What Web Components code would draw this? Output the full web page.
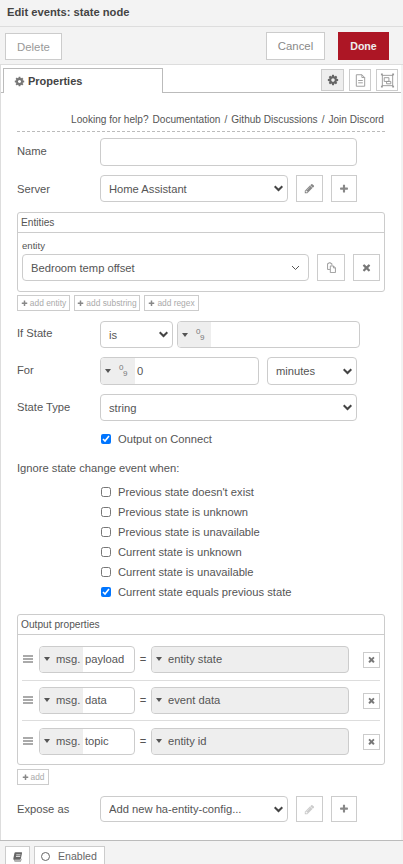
<!DOCTYPE html>
<html>
<head>
<meta charset="utf-8">
<title>Edit events: state node</title>
<style>
  html, body { margin: 0; height: 100%; }
  body { font-family: "Liberation Sans", Arial, sans-serif; font-size: 11.2px; color: #555; background: #fff; }
</style>
</head>
<body>
<ed-tray>
  <ed-bar slot="title">Edit events: state node</ed-bar>
  <ed-toolbar slot="toolbar">
    <ed-btn style="width:57px;height:27px;margin-top:1px;margin-right:auto;color:#999;font-size:11.4px">Delete</ed-btn>
    <ed-btn style="width:59px;height:28px;margin-right:13px;color:#888;font-size:11.4px">Cancel</ed-btn>
    <ed-btn kind="primary" style="width:51px;height:28px;font-size:10.6px">Done</ed-btn>
  </ed-toolbar>
  <ed-tabs slot="tabs"></ed-tabs>

  <ed-help></ed-help>

  <ed-row label="Name" style="margin-top:6px"><ed-field style="width:257px;height:28px"></ed-field></ed-row>
  <ed-row label="Server" style="margin-top:9px;--label-top:1px">
    <ed-select style="width:188px;height:27px">Home Assistant</ed-select>
    <ed-btn icon="pencil" size="11" style="width:27px;height:27px;margin-left:8px;color:#888"></ed-btn>
    <ed-btn icon="plus" size="10" style="width:26px;height:27px;margin-left:8px;color:#888"></ed-btn>
  </ed-row>

  <ed-box heading="Entities" style="margin-top:10px;height:80px">
    <div style="margin:7px 4px 0 4px;font-size:9.6px;line-height:11px">entity</div>
    <div style="display:flex;margin:3px 4px 0 4px">
      <ed-select thin style="width:287px;height:27px">Bedroom temp offset</ed-select>
      <ed-btn icon="copy" size="11" style="width:28px;height:27px;margin-left:8px;color:#999"></ed-btn>
      <ed-btn icon="times" size="11" style="width:27px;height:27px;margin-left:8px;color:#777"></ed-btn>
    </div>
  </ed-box>
  <ed-adds style="margin-top:3px">
    <ed-btn icon="plus" size="7" small style="width:53px;height:16px">add entity</ed-btn>
    <ed-btn icon="plus" size="7" small style="width:66px;height:16px">add substring</ed-btn>
    <ed-btn icon="plus" size="7" small style="width:55px;height:16px">add regex</ed-btn>
  </ed-adds>

  <ed-row label="If State" style="margin-top:10px;--label-top:-1px">
    <ed-select style="width:73px;height:27px">is</ed-select>
    <ed-typed num left="33" style="width:183px;height:27px;margin-left:4px"></ed-typed>
  </ed-row>
  <ed-row label="For" style="margin-top:9px">
    <ed-typed num left="34" value="0" style="width:159px;height:28px"></ed-typed>
    <ed-select style="width:90px;height:28px;margin-left:8px">minutes</ed-select>
  </ed-row>
  <ed-row label="State Type" style="margin-top:9px"><ed-select style="width:257px;height:27px">string</ed-select></ed-row>
  <ed-check checked style="margin-top:11px">Output on Connect</ed-check>

  <ed-note style="margin-top:15px">Ignore state change event when:</ed-note>
  <ed-check style="margin-top:10px">Previous state doesn't exist</ed-check>
  <ed-check style="margin-top:6px">Previous state is unknown</ed-check>
  <ed-check style="margin-top:6px">Previous state is unavailable</ed-check>
  <ed-check style="margin-top:6px">Current state is unknown</ed-check>
  <ed-check style="margin-top:6px">Current state is unavailable</ed-check>
  <ed-check checked style="margin-top:6px">Current state equals previous state</ed-check>

  <ed-box heading="Output properties" style="margin-top:15px;height:151px">
    <ed-prop name="payload" value="entity state" style="padding:11px 0 7px;border-bottom:1px solid #ddd"></ed-prop>
    <ed-prop name="data" value="event data" style="padding:6px 0;border-bottom:1px solid #ddd"></ed-prop>
    <ed-prop name="topic" value="entity id" style="padding:7px 0 0"></ed-prop>
  </ed-box>
  <ed-adds style="margin-top:4px"><ed-btn icon="plus" size="7" small style="width:32px;height:16px">add</ed-btn></ed-adds>

  <ed-row label="Expose as" style="margin-top:11px">
    <ed-select style="width:188px;height:26px">Add new ha-entity-config...</ed-select>
    <ed-btn icon="pencil" size="11" style="width:27px;height:26px;margin-left:8px;color:#ccc"></ed-btn>
    <ed-btn icon="plus" size="10" style="width:26px;height:26px;margin-left:8px;color:#888"></ed-btn>
  </ed-row>

  <ed-footer slot="footer"></ed-footer>
</ed-tray>

<script>
// fa4 style icons, 1792 unit box
const ICONS = {
  cog: 'M1152 896q0-106-75-181t-181-75-181 75-75 181 75 181 181 75 181-75 75-181zm512-109v222q0 12-8 23t-20 13l-185 28q-19 54-39 91 35 50 107 138 10 12 10 25t-9 23q-27 37-99 108t-94 71q-12 0-26-9l-138-108q-44 23-91 38-16 136-29 186-7 28-36 28h-222q-14 0-24.5-8.5t-11.5-21.5l-28-184q-49-16-90-37l-141 107q-10 9-25 9-14 0-25-11-126-114-165-168-7-10-7-23 0-12 8-23 15-21 51-66.5t54-70.5q-27-50-41-99l-183-27q-13-2-21-12.5t-8-23.5v-222q0-12 8-23t19-13l186-28q14-46 39-92-40-57-107-138-10-12-10-24 0-10 9-23 26-36 98.5-107.5t94.5-71.5q13 0 26 10l138 107q44-23 91-38 16-136 29-186 7-28 36-28h222q14 0 24.5 8.5t11.5 21.5l28 184q49 16 90 37l142-107q9-9 24-9 13 0 25 10 129 119 165 170 7 8 7 22 0 12-8 23-15 21-51 66.5t-54 70.5q26 50 41 98l183 28q13 2 21 12.5t8 23.5z',
  plus: 'M1600 736v192q0 40-28 68t-68 28h-416v416q0 40-28 68t-68 28h-192q-40 0-68-28t-28-68v-416h-416q-40 0-68-28t-28-68v-192q0-40 28-68t68-28h416v-416q0-40 28-68t68-28h192q40 0 68 28t28 68v416h416q40 0 68 28t28 68z',
  times: 'M1490 1322q0 40-28 68l-136 136q-28 28-68 28t-68-28l-294-294-294 294q-28 28-68 28t-68-28l-136-136q-28-28-28-68t28-68l294-294-294-294q-28-28-28-68t28-68l136-136q28-28 68-28t68 28l294 294 294-294q28-28 68-28t68 28l136 136q28 28 28 68t-28 68l-294 294 294 294q28 28 28 68z',
  pencil: 'M491 1536l91-91-235-235-91 91v107h128v128h107zm523-928q0-22-22-22-10 0-17 7l-542 542q-7 7-7 17 0 22 22 22 10 0 17-7l542-542q7-7 7-17zm-54-192l416 416-832 832h-416v-416zm683 96q0 53-37 90l-166 166-416-416 166-165q36-38 90-38 53 0 91 38l235 234q37 39 37 91z',
  book: 'M300 1500q-110-60-100-220l160-800q30-130 170-130h900q90 0 70 100l-190 900q-20 90-110 90h-800q-90 0-80 60t90 60h900l60-260 60-10-90 400q-10 40-50 40h-860q-90 0-130-230zm320-720h640l20-100h-640zm-40 220h640l20-100h-640z'
};
function iconSvg(name, size) {
  if (name == 'copy') {
    return `<svg width="${size}" height="${size}" viewBox="0 0 14 14" fill="none" stroke="currentColor" stroke-width="1.2"><path d="M5 9.5h-3v-7.5h1.5M3.5 2v-1h2.5v1h1.5v2"/><path d="M5.5 5h4l2.5 2.5v6h-6.5zM9.5 5v2.5h2.5"/></svg>`;
  }
  if (name == 'doc') {
    return `<svg width="${size}" height="${size}" viewBox="0 0 14 14" fill="none" stroke="currentColor" stroke-width="1"><path d="M2.5 .8h6l3 3v9.4h-9zM8.5 .8v3h3M4.5 7h5M4.5 9.5h5"/></svg>`;
  }
  if (name == 'frame') {
    return `<svg width="${size}" height="${size}" viewBox="0 0 16 16" fill="none" stroke="currentColor" stroke-width="1"><path d="M2 2.5h12M2 13.5h12M2.5 2v12M13.5 2v12M4.5 5h5v4h-5zM7 9h4.5v2.5h-4.5z"/><path stroke-width="2" d="M1 1.5h2M13 1.5h2M1 14.5h2M13 14.5h2"/></svg>`;
  }
  return `<svg width="${size}" height="${size}" viewBox="0 0 1792 1792" fill="currentColor"><path d="${ICONS[name]}"/></svg>`;
}

class EdTray extends HTMLElement {
  constructor() {
    super();
    this.attachShadow({ mode: 'open' }).innerHTML = `
      <style>
        :host { display: flex; flex-direction: column; height: 864px; width: 403px; overflow: hidden; background: #f3f3f3; }
        .body { flex: 1; min-height: 0; background: #fff; border-left: 1px solid #ddd; margin-right: 2px; }
        .inner { padding: 0 16px; display: block; }
      </style>
      <slot name="title"></slot>
      <slot name="toolbar"></slot>
      <div class="body">
        <slot name="tabs"></slot>
        <div class="inner"><slot></slot></div>
      </div>
      <slot name="footer"></slot>`;
  }
}

class EdBar extends HTMLElement {
  constructor() {
    super();
    this.attachShadow({ mode: 'open' }).innerHTML = `
      <style>
        :host { display: block; height: 26px; line-height: 25px; padding-left: 7px; font-weight: bold; font-size: 11.2px; color: #444; border-bottom: 1px solid #ddd; box-sizing: content-box; }
      </style><slot></slot>`;
  }
}

class EdToolbar extends HTMLElement {
  constructor() {
    super();
    this.attachShadow({ mode: 'open' }).innerHTML = `
      <style>
        :host { display: flex; align-items: flex-start; height: 32px; padding: 5px 14px 0 5px; border-bottom: 1px solid #ddd; }
      </style><slot></slot>`;
  }
}

class EdBtn extends HTMLElement {
  constructor() {
    super();
    const icon = this.getAttribute('icon');
    const size = this.getAttribute('size') || 11;
    this.attachShadow({ mode: 'open' }).innerHTML = `
      <style>
        :host { display: inline-flex; align-items: center; justify-content: center; box-sizing: border-box; background: #fff; border: 1px solid #ccc; flex: none; white-space: nowrap; }
        :host([kind=primary]) { background: #ad1625; border-color: #ad1625; color: #eee; font-weight: bold; }
        :host([small]) { font-size: 8.4px; color: #aaa; }
        svg { display: block; flex: none; }
        :host([small]) svg { color: #888; margin-right: 2px; }
      </style>${icon ? iconSvg(icon, size) : ''}<slot></slot>`;
  }
}

class EdTabs extends HTMLElement {
  constructor() {
    super();
    this.attachShadow({ mode: 'open' }).innerHTML = `
      <style>
        :host { display: flex; height: 28px; box-sizing: border-box; border-bottom: 1px solid #bbb; padding: 3px 3px 0 2px; align-items: flex-start; }
        .tab { width: 160px; height: 25px; box-sizing: border-box; border: 1px solid #bbb; border-bottom: none; background: #fff; margin-bottom: -1px;
               display: flex; align-items: center; padding-left: 10px; gap: 3px; font-weight: bold; font-size: 11px; color: #444; }
        .tab svg { color: #777; }
        .tools { margin-left: auto; display: flex; gap: 5px; margin-top: 1px; }
        .tool { width: 22px; height: 22px; box-sizing: border-box; border: 1px solid #ccc; display: flex; align-items: center; justify-content: center; color: #999; }
        .tool.on { width: 23px; background: #eee; color: #666; }
      </style>
      <div class="tab">${iconSvg('cog', 11)}<span>Properties</span></div>
      <div class="tools">
        <div class="tool on">${iconSvg('cog', 12)}</div>
        <div class="tool">${iconSvg('doc', 13)}</div>
        <div class="tool">${iconSvg('frame', 15)}</div>
      </div>`;
  }
}

class EdHelp extends HTMLElement {
  constructor() {
    super();
    this.attachShadow({ mode: 'open' }).innerHTML = `
      <style>
        :host { display: flex; justify-content: flex-end; gap: 4px; padding: 20px 1px 5px 0; border-bottom: 1px dashed #bbb; line-height: 13px; font-size: 10.1px; color: #555; white-space: nowrap; }
      </style>
      <span>Looking for help?</span><span>Documentation</span><span>/</span><span>Github Discussions</span><span>/</span><span>Join Discord</span>`;
  }
}

class EdRow extends HTMLElement {
  constructor() {
    super();
    this.attachShadow({ mode: 'open' }).innerHTML = `
      <style>
        :host { display: flex; align-items: flex-start; }
        .label { width: 83px; flex: none; line-height: 26px; margin-top: var(--label-top, 0); }
        .ctl { display: flex; }
      </style>
      <div class="label">${this.getAttribute('label')}</div>
      <div class="ctl"><slot></slot></div>`;
  }
}

class EdField extends HTMLElement {
  constructor() {
    super();
    this.attachShadow({ mode: 'open' }).innerHTML = `
      <style>:host { display: block; box-sizing: border-box; border: 1px solid #ccc; border-radius: 4px; background: #fff; }</style>`;
  }
}

class EdSelect extends HTMLElement {
  constructor() {
    super();
    const thin = this.hasAttribute('thin');
    const chevron = thin
      ? '<svg width="9" height="6" viewBox="0 0 9 6" fill="none" stroke="#555" stroke-width="1"><path d="M1 1l3.5 3.5L8 1"/></svg>'
      : '<svg width="9" height="7" viewBox="0 0 9 7" fill="none" stroke="#444" stroke-width="2"><path d="M.7 1.2l3.8 3.8 3.8-3.8"/></svg>';
    this.attachShadow({ mode: 'open' }).innerHTML = `
      <style>
        :host { display: flex; align-items: center; box-sizing: border-box; border: 1px solid #ccc; border-radius: 4px; background: #fff; padding: 0 ${thin ? 8 : 4}px 0 8px; flex: none; }
        .t { flex: 1; white-space: nowrap; overflow: hidden; }
        svg { flex: none; display: block; }
      </style>
      <div class="t"><slot></slot></div>${chevron}`;
  }
}

class EdTyped extends HTMLElement {
  constructor() {
    super();
    const num = this.hasAttribute('num');
    const left = this.getAttribute('left');
    const label = this.getAttribute('label') || '';
    const value = this.getAttribute('value') || '';
    const full = this.hasAttribute('full');
    this.attachShadow({ mode: 'open' }).innerHTML = `
      <style>
        :host { display: flex; box-sizing: border-box; border: 1px solid #ccc; border-radius: 4px; overflow: hidden; background: ${full ? '#eee' : '#fff'}; flex: none; }
        .left { width: ${left ? left + 'px' : 'auto'}; flex: none; background: #eee; display: flex; align-items: center; padding: 0 0 var(--text-lift, 0) 4px; box-sizing: border-box; }
        .caret { width: 0; height: 0; border: 3.5px solid transparent; border-top: 4px solid #555; border-bottom: 0; flex: none; }
        .label { margin-left: 6px; }
        .num { width: 10px; height: 14px; margin-left: 8px; font-size: 8px; line-height: 8px; color: #777; }
        .num i { font-style: normal; display: block; }
        .num i + i { margin-left: 4px; margin-top: -2px; }
        .val { flex: 1; display: flex; align-items: center; padding: 0 0 var(--text-lift, 0) ${full ? 0 : 2}px; white-space: nowrap; }
      </style>
      <div class="left"><span class="caret"></span>${num ? '<div class="num"><i>0</i><i>9</i></div>' : ''}${label ? `<span class="label">${label}</span>` : ''}</div>
      <div class="val">${value}</div>`;
  }
}

class EdCheck extends HTMLElement {
  constructor() {
    super();
    this.attachShadow({ mode: 'open' }).innerHTML = `
      <style>
        :host { display: flex; align-items: center; height: 14px; padding-left: 84px; }
        input { width: 10px; height: 10px; margin: 0 7px 0 0; flex: none; }
      </style>
      <input type="checkbox" ${this.hasAttribute('checked') ? 'checked' : ''}><span><slot></slot></span>`;
  }
}

class EdNote extends HTMLElement {
  constructor() {
    super();
    this.attachShadow({ mode: 'open' }).innerHTML = `
      <style>:host { display: block; line-height: 14px; }</style><slot></slot>`;
  }
}

class EdBox extends HTMLElement {
  constructor() {
    super();
    this.attachShadow({ mode: 'open' }).innerHTML = `
      <style>
        :host { display: block; box-sizing: border-box; border: 1px solid #ccc; border-radius: 3px; width: 368px; font-size: 11.2px; }
        .head { height: 19px; line-height: 19px; padding-left: 3px; border-bottom: 1px solid #ccc; font-size: 10.2px; }
      </style>
      <div class="head">${this.getAttribute('heading')}</div><slot></slot>`;
  }
}

class EdAdds extends HTMLElement {
  constructor() {
    super();
    this.attachShadow({ mode: 'open' }).innerHTML = `
      <style>:host { display: flex; gap: 4px; }</style><slot></slot>`;
  }
}

class EdProp extends HTMLElement {
  constructor() {
    super();
    this.attachShadow({ mode: 'open' }).innerHTML = `
      <style>
        :host { display: flex; align-items: center; margin: 0 4px; --text-lift: 1px; }
        .handle { width: 10px; height: 8px; margin: -1px 6px 0 1px; flex: none; background: repeating-linear-gradient(#aaa 0 2px, transparent 2px 3px); }
        .eq { width: 16px; text-align: center; flex: none; padding-bottom: 1px; }
        ed-typed.m { width: 96px; height: 27px; }
        ed-typed.v { width: 198px; height: 27px; }
        ed-btn { width: 17px; height: 16px; margin-left: auto; color: #777; }
      </style>
      <div class="handle"></div>
      <ed-typed class="m" left="43" label="msg." value="${this.getAttribute('name')}"></ed-typed>
      <div class="eq">=</div>
      <ed-typed class="v" full label="${this.getAttribute('value')}"></ed-typed>
      <ed-btn icon="times" size="9" class="x"></ed-btn>`;
  }
}

class EdFooter extends HTMLElement {
  constructor() {
    super();
    this.attachShadow({ mode: 'open' }).innerHTML = `
      <style>
        :host { display: flex; align-items: flex-start; gap: 4px; height: 18px; border-top: 1px solid #bbb; padding: 5px 0 0 5px; flex: none; font-size: 10.6px; }
        .b { box-sizing: border-box; height: 30px; background: #fff; border: 1px solid #ccc; display: flex; align-items: center; flex: none; }
        .book { width: 25px; justify-content: center; color: #666; padding-bottom: 10px; }
        .en { width: 71px; padding: 0 0 10px 6px; gap: 8px; color: #666; }
        .dot { width: 7px; height: 7px; border: 1px solid #666; border-radius: 50%; }
      </style>
      <div class="b book">${iconSvg('book', 12)}</div>
      <div class="b en"><span class="dot"></span><span>Enabled</span></div>`;
  }
}

// define inner parts first so the shadow markup upgrades straight away
customElements.define('ed-btn', EdBtn);
customElements.define('ed-typed', EdTyped);
customElements.define('ed-tray', EdTray);
customElements.define('ed-bar', EdBar);
customElements.define('ed-toolbar', EdToolbar);
customElements.define('ed-tabs', EdTabs);
customElements.define('ed-help', EdHelp);
customElements.define('ed-row', EdRow);
customElements.define('ed-field', EdField);
customElements.define('ed-select', EdSelect);
customElements.define('ed-check', EdCheck);
customElements.define('ed-note', EdNote);
customElements.define('ed-box', EdBox);
customElements.define('ed-adds', EdAdds);
customElements.define('ed-prop', EdProp);
customElements.define('ed-footer', EdFooter);
</script>
</body>
</html>
